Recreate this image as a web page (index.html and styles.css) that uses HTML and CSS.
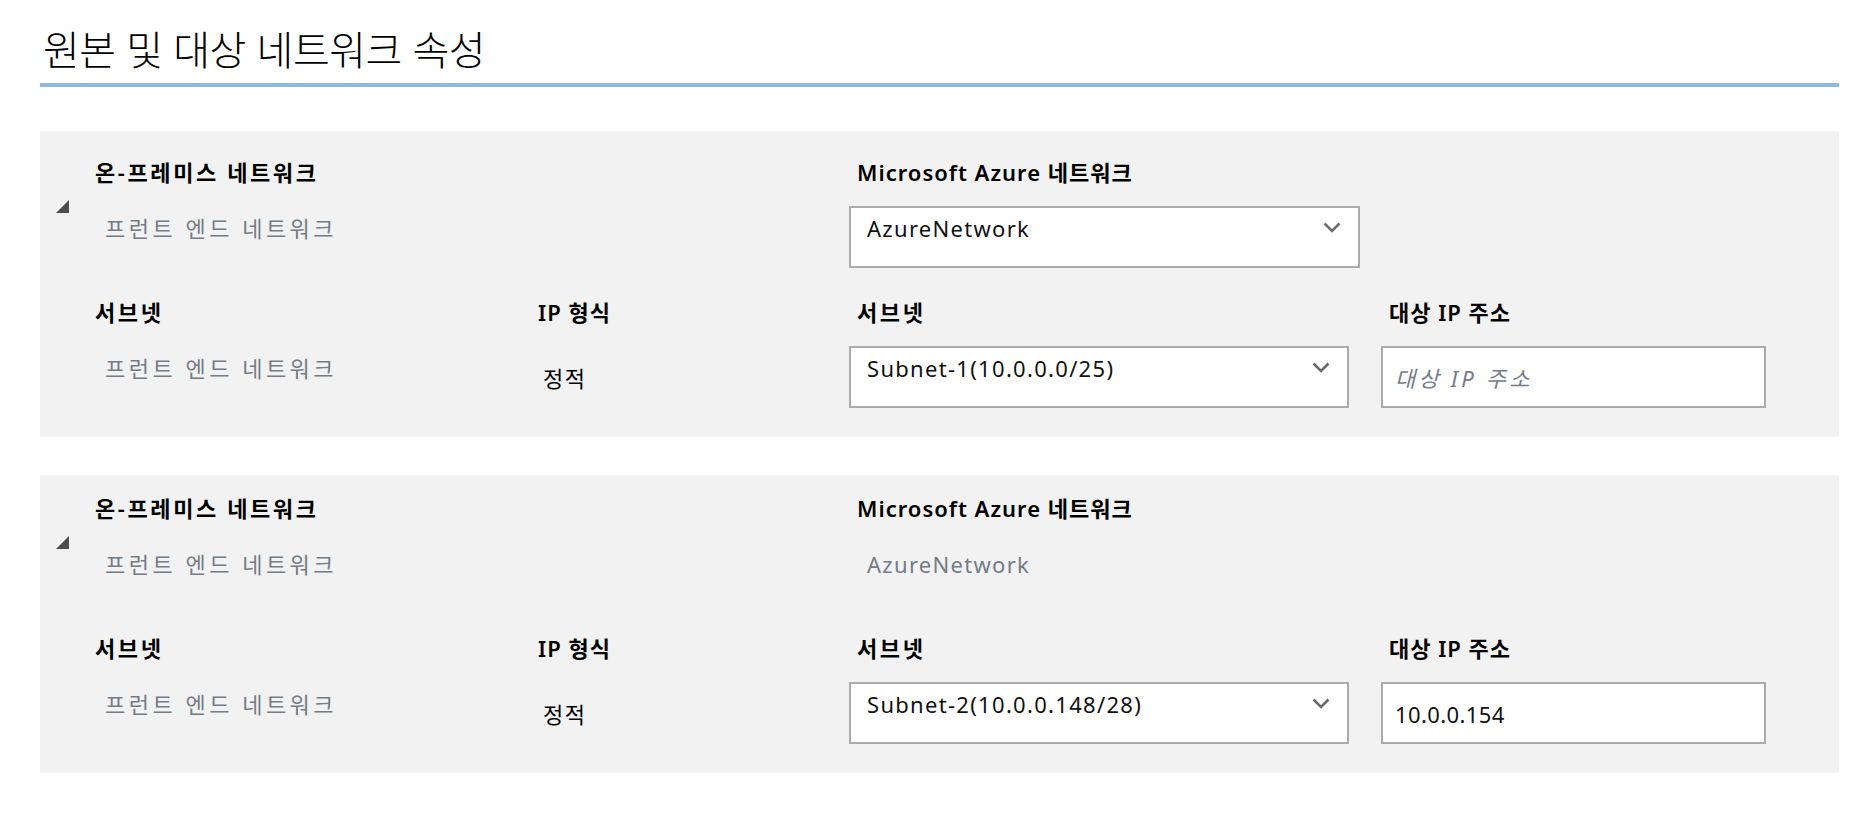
FILE: index.html
```html
<!DOCTYPE html>
<html lang="ko">
<head>
<meta charset="utf-8">
<title>원본 및 대상 네트워크 속성</title>
<link rel="stylesheet" href="styles.css">
</head>
<body>
<div class="page">
  <h1 class="title">원본 및 대상 네트워크 속성</h1>

  <section class="panel">
    <div class="toggle"></div>
    <div class="cell col1">
      <div class="label label--ko">온-프레미스 네트워크</div>
      <div class="value value--gray value--ko">프런트 엔드 네트워크</div>
    </div>
    <div class="cell col3">
      <div class="label">Microsoft Azure 네트워크</div>
      <div class="select select--wide">
        <span class="select-text">AzureNetwork</span>
        <svg class="chevron" width="18" height="11" viewBox="0 0 18 11"><polyline points="1.5,1.5 9,9 16.5,1.5" fill="none" stroke="#6b6b6b" stroke-width="2.6"/></svg>
      </div>
    </div>

    <div class="cell col1">
      <div class="label label--ko">서브넷</div>
      <div class="value value--gray value--ko">프런트 엔드 네트워크</div>
    </div>
    <div class="cell col2">
      <div class="label">IP 형식</div>
      <div class="value value--mid">정적</div>
    </div>
    <div class="cell col3">
      <div class="label label--ko">서브넷</div>
      <div class="select">
        <span class="select-text">Subnet-1(10.0.0.0/25)</span>
        <svg class="chevron" width="18" height="11" viewBox="0 0 18 11"><polyline points="1.5,1.5 9,9 16.5,1.5" fill="none" stroke="#6b6b6b" stroke-width="2.6"/></svg>
      </div>
    </div>
    <div class="cell col4">
      <div class="label">대상 IP 주소</div>
      <div class="input"><span class="placeholder">대상 IP 주소</span></div>
    </div>
  </section>

  <section class="panel panel--static">
    <div class="toggle"></div>
    <div class="cell col1">
      <div class="label label--ko">온-프레미스 네트워크</div>
      <div class="value value--gray value--ko">프런트 엔드 네트워크</div>
    </div>
    <div class="cell col3">
      <div class="label">Microsoft Azure 네트워크</div>
      <div class="value value--gray value--latin">AzureNetwork</div>
    </div>

    <div class="cell col1">
      <div class="label label--ko">서브넷</div>
      <div class="value value--gray value--ko">프런트 엔드 네트워크</div>
    </div>
    <div class="cell col2">
      <div class="label">IP 형식</div>
      <div class="value value--mid">정적</div>
    </div>
    <div class="cell col3">
      <div class="label label--ko">서브넷</div>
      <div class="select">
        <span class="select-text">Subnet-2(10.0.0.148/28)</span>
        <svg class="chevron" width="18" height="11" viewBox="0 0 18 11"><polyline points="1.5,1.5 9,9 16.5,1.5" fill="none" stroke="#6b6b6b" stroke-width="2.6"/></svg>
      </div>
    </div>
    <div class="cell col4">
      <div class="label">대상 IP 주소</div>
      <div class="input"><span class="input-text">10.0.0.154</span></div>
    </div>
  </section>
</div>
</body>
</html>
```

FILE: styles.css
```css
html, body {
  margin: 0;
  padding: 0;
  background: #ffffff;
}

body {
  font-family: "Noto Sans", "Noto Sans CJK KR", sans-serif;
  color: #000000;
}

.page {
  padding: 0 31px 0 40px;
}

.title {
  margin: 0 0 44px 0;
  padding: 23px 0 10px 3px;
  font-family: "Noto Sans CJK KR", "Noto Sans", sans-serif;
  font-size: 40px;
  line-height: 50px;
  font-weight: 300;
  letter-spacing: -0.5px;
  color: #000000;
  border-bottom: 4px solid #8cbae0;
}

.panel {
  display: grid;
  grid-template-columns: 47px 443px 319px 532px 1fr;
  row-gap: 29px;
  background: #f2f2f2;
  padding: 26px 0 29px 0;
  margin-bottom: 38px;
}

.panel--static {
  padding-top: 18px;
}

.toggle {
  grid-column: 1;
  grid-row: 1;
  align-self: start;
  width: 13px;
  height: 13px;
  margin: 43px 0 0 16px;
  background: #4d4d4d;
  clip-path: polygon(100% 0, 100% 100%, 0 100%);
}

.cell {
  display: flex;
  flex-direction: column;
  gap: 19px;
  min-width: 0;
}

.col1 { grid-column: 2; }
.col2 { grid-column: 3; }
.col3 { grid-column: 4; }
.col4 { grid-column: 5; }

.label {
  padding-left: 8px;
  font-size: 22px;
  line-height: 30px;
  font-weight: 600;
  letter-spacing: 1px;
  white-space: nowrap;
}

.label--ko {
  letter-spacing: 2.6px;
}

.value {
  box-sizing: border-box;
  height: 62px;
  font-size: 22px;
  line-height: 30px;
  white-space: nowrap;
}

.value--gray {
  color: #737c87;
  padding-top: 7px;
}

.value--ko {
  padding-left: 18px;
  letter-spacing: 3.5px;
}

.value--latin {
  padding-left: 18px;
  letter-spacing: 1.3px;
}

.value--mid {
  display: flex;
  align-items: center;
  padding-left: 13px;
  padding-top: 2px;
  letter-spacing: 1.5px;
}

.select {
  box-sizing: border-box;
  width: 500px;
  height: 62px;
  display: flex;
  justify-content: space-between;
  align-items: flex-start;
  padding: 5px 16px;
  background: #ffffff;
  border: 2px solid #ababab;
}

.select--wide {
  width: 511px;
}

.select-text {
  font-size: 22px;
  line-height: 30px;
  letter-spacing: 1.3px;
  color: #111111;
  white-space: nowrap;
}

.chevron {
  display: block;
  margin: 9px 1px 0 0;
  flex: none;
}

.input {
  box-sizing: border-box;
  width: 385px;
  height: 62px;
  display: flex;
  align-items: center;
  padding: 2px 12px 0 12px;
  background: #ffffff;
  border: 2px solid #ababab;
}

.placeholder {
  font-size: 22px;
  line-height: 30px;
  font-style: italic;
  letter-spacing: 3.2px;
  color: #737c87;
  white-space: nowrap;
}

.input-text {
  font-size: 22px;
  line-height: 30px;
  color: #111111;
  letter-spacing: 0.4px;
  white-space: nowrap;
}
```
